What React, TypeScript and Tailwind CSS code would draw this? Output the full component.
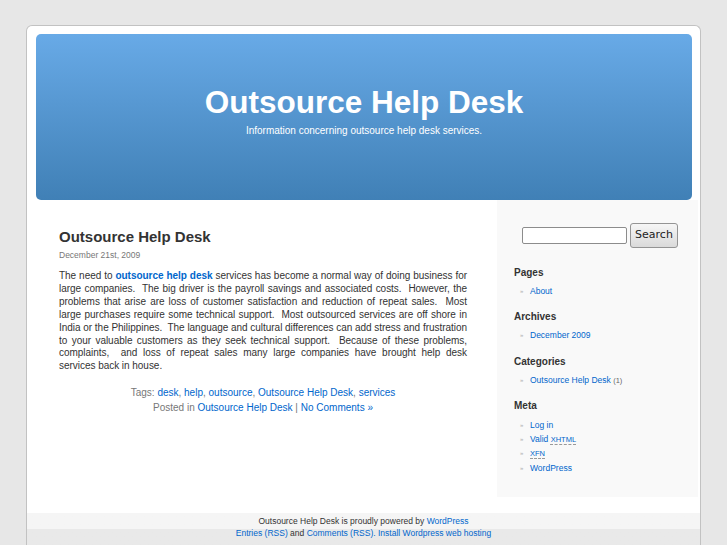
export default function App() {
  return (
    <div className="min-h-[545px] bg-[#e7e7e7] pt-[25px] font-['Liberation_Sans',Arial,sans-serif] text-[#333]">
      <div className="mx-auto w-[675px] rounded-t-[6px] border border-b-0 border-[#c2c2c2] bg-white pt-[8px]">
        {/* Header */}
        <div className="ml-[9px] mr-[8px] h-[166px] rounded-[5px] bg-linear-to-b from-[#68aae7] to-[#4080b6] pt-[50px] text-center text-white">
          <h1 className="text-[31.5px] font-bold leading-[36px]">Outsource Help Desk</h1>
          <p className="mt-[4px] text-[10px] leading-[14px]">Information concerning outsource help desk services.</p>
        </div>

        {/* Content */}
        <div className="flex">
          <div className="flex-1 pl-[32px] pr-[30px] pt-[28px]">
            <h2 className="text-[15px] font-bold leading-[18px] text-[#333]">Outsource Help Desk</h2>
            <div className="mt-[4px] text-[8.5px] leading-[10px] text-[#777]">December 21st, 2009</div>
            <p className="mt-[10px] text-justify text-[10px] leading-[12.9px] tracking-[-0.035px] text-[#333]">
              The need to{" "}
              <a className="font-bold text-[#0066cc]">outsource help desk</a> services has become a normal way of doing
              business for large companies.&nbsp; The big driver is the payroll savings and associated costs.&nbsp; However,
              the problems that arise are loss of customer satisfaction and reduction of repeat sales.&nbsp; Most large
              purchases require some technical support.&nbsp; Most outsourced services are off shore in India or the
              Philippines.&nbsp; The language and cultural differences can add stress and frustration to your valuable
              customers as they seek technical support.&nbsp; Because of these problems, complaints,&nbsp; and loss of
              repeat sales many large companies have brought help desk services back in house.
            </p>
            <div className="mt-[13px] text-center text-[10px] leading-[14.5px] text-[#777]">
              <div>
                Tags: <a className="text-[#0066cc]">desk</a>, <a className="text-[#0066cc]">help</a>,{" "}
                <a className="text-[#0066cc]">outsource</a>, <a className="text-[#0066cc]">Outsource Help Desk</a>,{" "}
                <a className="text-[#0066cc]">services</a>
              </div>
              <div>
                Posted in <a className="text-[#0066cc]">Outsource Help Desk</a> |{" "}
                <a className="text-[#0066cc]">No Comments »</a>
              </div>
            </div>
          </div>

          {/* Sidebar */}
          <div className="mr-[2px] h-[297px] w-[201px] bg-[#f9f9f9] pl-[17px] pt-[23px]">
            <div className="flex items-center pl-[8px]">
              <input className="h-[17px] w-[105px] rounded-[2px] border border-[#8c8c8c] bg-white" />
              <button className="ml-[3px] h-[25px] w-[48px] rounded-[3px] border border-[#949494] bg-linear-to-b from-[#f6f6f6] to-[#dadada] font-['DejaVu_Sans',sans-serif] text-[11px] text-[#222]">
                Search
              </button>
            </div>

            <SideHeading className="mt-[18px]">Pages</SideHeading>
            <ul className="mt-[4px]">
              <SideItem>
                <a className="text-[#0066cc]">About</a>
              </SideItem>
            </ul>

            <SideHeading className="mt-[12px]">Archives</SideHeading>
            <ul className="mt-[4px]">
              <SideItem>
                <a className="text-[#0066cc]">December 2009</a>
              </SideItem>
            </ul>

            <SideHeading className="mt-[12.5px]">Categories</SideHeading>
            <ul className="mt-[4px]">
              <SideItem>
                <a className="text-[#0066cc]">Outsource Help Desk</a>{" "}
                <span className="text-[7.5px] text-[#666]">(1)</span>
              </SideItem>
            </ul>

            <SideHeading className="mt-[11.5px]">Meta</SideHeading>
            <ul className="mt-[5px]">
              <SideItem>
                <a className="text-[#0066cc]">Log in</a>
              </SideItem>
              <SideItem>
                <a className="text-[#0066cc]">
                  Valid{" "}
                  <abbr className="text-[7.5px] underline decoration-dashed decoration-[#999] underline-offset-2">XHTML</abbr>
                </a>
              </SideItem>
              <SideItem>
                <a className="text-[#0066cc]">
                  <abbr className="text-[7.5px] underline decoration-dashed decoration-[#999] underline-offset-2">XFN</abbr>
                </a>
              </SideItem>
              <SideItem>
                <a className="text-[#0066cc]">WordPress</a>
              </SideItem>
            </ul>
          </div>
        </div>

        {/* Footer */}
        <div className="mt-[16px] bg-linear-to-b from-[#f5f5f5] from-50% to-[#e9e9e9] to-50% pb-[6px] pt-[2px] text-center text-[8.5px] leading-[12px] text-[#333]">
          <div>
            Outsource Help Desk is proudly powered by <a className="text-[#0066cc]">WordPress</a>
          </div>
          <div>
            <a className="text-[#0066cc]">Entries (RSS)</a> and <a className="text-[#0066cc]">Comments (RSS)</a>
            <a className="text-[#0066cc]">. Install Wordpress web hosting</a>
          </div>
        </div>
      </div>
    </div>
  )
}

function SideHeading({ children, className }: { children: React.ReactNode; className?: string }) {
  return <h3 className={`text-[10px] font-bold leading-[14px] text-[#333] ${className ?? ""}`}>{children}</h3>
}

function SideItem({ children }: { children: React.ReactNode }) {
  return (
    <li className="flex h-[14.3px] items-center text-[8.5px] leading-[14.3px]">
      <span className="w-[16px] pl-[6px] text-[6px] text-[#aaa]">»</span>
      <span>{children}</span>
    </li>
  )
}
